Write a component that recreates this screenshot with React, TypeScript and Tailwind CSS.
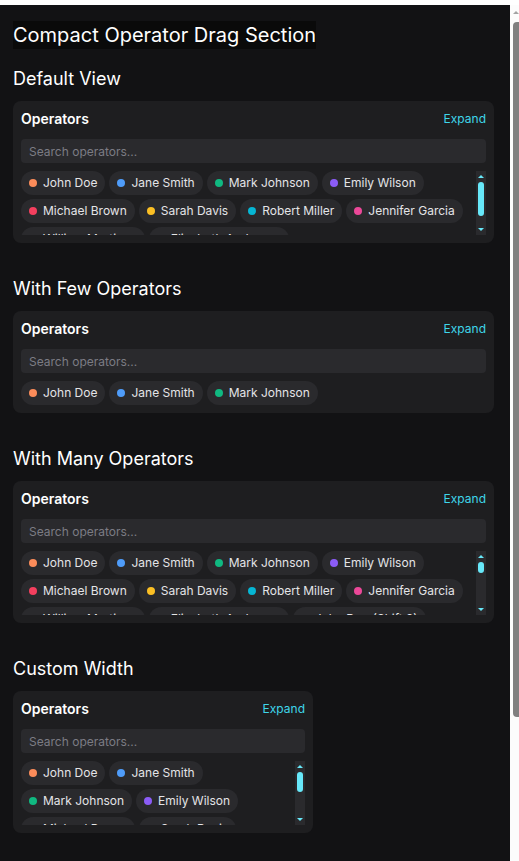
import { useLayoutEffect, useRef, useState } from "react";
import type { RefObject } from "react";

type Operator = { id: string; name: string; color: string };

const BASE: Operator[] = [
  { id: "1", name: "John Doe", color: "bg-[#fb8c5a]" },
  { id: "2", name: "Jane Smith", color: "bg-[#4f9cf9]" },
  { id: "3", name: "Mark Johnson", color: "bg-[#10b981]" },
  { id: "4", name: "Emily Wilson", color: "bg-[#8b5cf6]" },
  { id: "5", name: "Michael Brown", color: "bg-[#f43f5e]" },
  { id: "6", name: "Sarah Davis", color: "bg-[#fbbf24]" },
  { id: "7", name: "Robert Miller", color: "bg-[#06b6d4]" },
  { id: "8", name: "Jennifer Garcia", color: "bg-[#ec4899]" },
  { id: "9", name: "William Martinez", color: "bg-[#84cc16]" },
  { id: "10", name: "Elizabeth Anderson", color: "bg-[#f97316]" },
];

// extra shifts for the "many" demo
const MANY: Operator[] = [
  ...BASE,
  ...BASE.map((o) => ({ ...o, id: `${o.id}-s2`, name: `${o.name} (Shift 2)` })),
  ...BASE.slice(0, 3).map((o) => ({ ...o, id: `${o.id}-s3`, name: `${o.name} (Shift 3)` })),
];

/** thumb size/offset for a scroll box, arrows = px taken by each arrow button */
function useThumb(ref: RefObject<HTMLDivElement | null>, arrows: number) {
  const [t, setT] = useState({ show: false, h: 0, top: 0 });
  useLayoutEffect(() => {
    const el = ref.current;
    if (!el) return;
    const update = () => {
      const { clientHeight, scrollHeight, scrollTop } = el;
      const track = clientHeight - arrows * 2;
      if (scrollHeight <= clientHeight + 1) {
        setT({ show: false, h: 0, top: 0 });
        return;
      }
      const h = Math.max(8, Math.round((track * clientHeight) / scrollHeight));
      const top = Math.round(
        ((track - h) * scrollTop) / (scrollHeight - clientHeight)
      );
      setT({ show: true, h, top });
    };
    update();
    el.addEventListener("scroll", update);
    const ro = new ResizeObserver(update);
    ro.observe(el);
    return () => {
      el.removeEventListener("scroll", update);
      ro.disconnect();
    };
  }, [ref, arrows]);
  return t;
}

function Arrow({ up, className }: { up?: boolean; className: string }) {
  return (
    <svg viewBox="0 0 6 3" className={`h-[3px] w-[6px] ${className}`}>
      <path d={up ? "M0 3 L3 0 L6 3 Z" : "M0 0 L6 0 L3 3 Z"} fill="currentColor" />
    </svg>
  );
}

function OperatorChip({ op }: { op: Operator }) {
  return (
    <div
      draggable
      className="flex h-6 cursor-grab items-center gap-1.5 rounded-full bg-[#2a2a2d] px-2 text-xs text-[#e4e4e7]"
    >
      <span className={`h-2 w-2 shrink-0 rounded-full ${op.color}`} />
      <span className="whitespace-nowrap">{op.name}</span>
    </div>
  );
}

function CompactOperatorDrag({
  operators,
  widthClass = "w-[481px]",
}: {
  operators: Operator[];
  widthClass?: string;
}) {
  const [query, setQuery] = useState("");
  const listRef = useRef<HTMLDivElement>(null);
  const thumb = useThumb(listRef, 11);
  const list = operators.filter((o) =>
    o.name.toLowerCase().includes(query.trim().toLowerCase())
  );

  return (
    <div className={`rounded-lg bg-[#1e1e20] p-2 ${widthClass}`}>
      <div className="mb-[10px] flex h-5 items-center justify-between">
        <h3 className="text-sm font-semibold text-white">Operators</h3>
        <button className="text-xs text-[#3fd6ea]">Expand</button>
      </div>
      <input
        value={query}
        onChange={(e) => setQuery(e.target.value)}
        placeholder="Search operators..."
        className="mb-2 block h-6 w-full rounded bg-[#2a2a2d] px-2 text-xs text-[#e4e4e7] outline-none placeholder:text-[#7c7c84]"
      />
      <div className="flex">
        <div
          ref={listRef}
          className="flex max-h-16 flex-1 flex-wrap content-start gap-1 overflow-y-auto [scrollbar-width:none]"
        >
          {list.map((op) => (
            <OperatorChip key={op.id} op={op} />
          ))}
        </div>
        {thumb.show ? (
          <div className="flex h-16 w-[10px] shrink-0 flex-col items-center bg-[#2a2a2d]">
            <div className="flex h-[11px] items-center">
              <Arrow up className="text-[#67e8f9]" />
            </div>
            <div className="relative w-full flex-1">
              <div
                className="absolute left-[2px] w-[6px] rounded-full bg-[#67e8f9]"
                style={{ top: thumb.top, height: thumb.h }}
              />
            </div>
            <div className="flex h-[11px] items-center">
              <Arrow className="text-[#67e8f9]" />
            </div>
          </div>
        ) : null}
      </div>
    </div>
  );
}

function Section({ title, children }: { title: string; children: React.ReactNode }) {
  return (
    <section>
      <h2 className="mb-2 text-lg leading-7 text-white">{title}</h2>
      {children}
    </section>
  );
}

export default function App() {
  const mainRef = useRef<HTMLDivElement>(null);
  const pageThumb = useThumb(mainRef, 15);

  return (
    <div className="flex h-screen bg-white pt-[5px] font-['Inter','Liberation_Sans',sans-serif]">
      <main
        ref={mainRef}
        className="flex-1 overflow-y-auto bg-[#121214] px-[13px] pt-4 pb-[190px] [scrollbar-width:none]"
      >
        <h1 className="mb-4 inline-block bg-[#0a0a0a] text-xl leading-7 text-white">
          Compact Operator Drag Section
        </h1>
        <div className="flex flex-col gap-8">
          <Section title="Default View">
            <CompactOperatorDrag operators={BASE} />
          </Section>
          <Section title="With Few Operators">
            <CompactOperatorDrag operators={BASE.slice(0, 3)} />
          </Section>
          <Section title="With Many Operators">
            <CompactOperatorDrag operators={MANY} />
          </Section>
          <Section title="Custom Width">
            <CompactOperatorDrag operators={BASE} widthClass="w-[300px]" />
          </Section>
        </div>
      </main>
      {/* page scrollbar */}
      <div className="flex w-[9px] shrink-0 flex-col bg-[#fcfcfc] pl-[3px]">
        <div className="flex h-[15px] items-center">
          <Arrow up className="text-[#a3a3a3]" />
        </div>
        <div className="relative flex-1">
          {pageThumb.show ? (
            <div
              className="absolute left-0 w-[10px] rounded-l-[4px] bg-[#808080]"
              style={{ top: pageThumb.top + 2, height: pageThumb.h }}
            />
          ) : null}
        </div>
        <div className="h-[15px]" />
      </div>
    </div>
  );
}
